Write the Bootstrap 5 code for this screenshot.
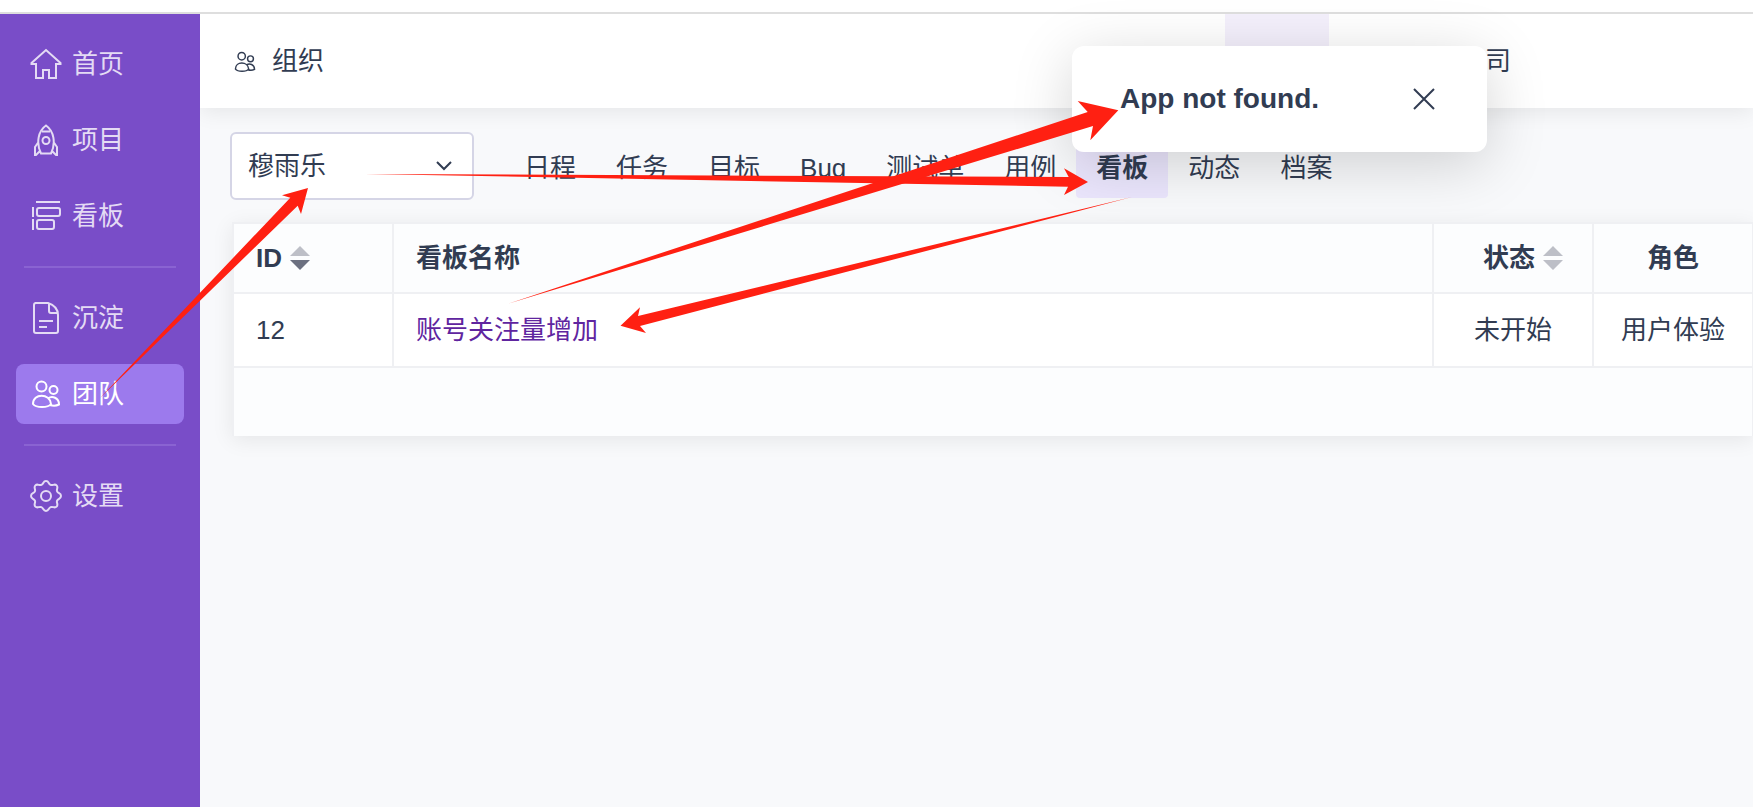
<!DOCTYPE html>
<html lang="zh-CN">
<head>
<meta charset="utf-8">
<meta name="viewport" content="width=device-width, initial-scale=1">
<title>组织 - 看板</title>
<link rel="stylesheet" href="https://cdn.jsdelivr.net/npm/bootstrap@5.3.0/dist/css/bootstrap.min.css">
<style>
  body { font-family: "Liberation Sans", "Noto Sans CJK SC", sans-serif; font-size: 26px; line-height: 40px; color: #313c52; background: #f8f9fb; overflow: hidden; }
  .top-strip { height: 14px; border-bottom: 2px solid #dedede; }
  .side-menu { width: 200px; background: #794dc8; padding: 20px 16px; }
  .side-menu ul { gap: 16px; }
  .side-menu .nav-link { display: flex; align-items: center; gap: 10px; height: 60px; padding: 0 14px; border-radius: 8px; color: #e4dbf4; }
  .side-menu .nav-link.active { background: #9c7aed; color: #fff; }
  .side-menu hr { margin: 4px 8px; border-top: 2px solid #8a63d2; opacity: 1; }
  .line-icon { fill: none; stroke: currentColor; stroke-width: 2; flex: none; }
  .app-bar { height: 94px; padding: 0 242px 0 34px; box-shadow: 0 4px 20px rgba(0,0,0,.08); }
  .app-bar .marker { width: 104px; background: #f4f0fc; margin-right: 156px; }
  .work-area { padding: 24px 0 0 30px; }
  .user-pick { width: 244px; height: 68px; border: 2px solid #d5d5e6; border-radius: 6px; padding: 0 16px; font-size: 26px; line-height: 40px; color: inherit; background: #fff; appearance: none; }
  .pick-wrap svg { position: absolute; right: 21px; top: 28px; pointer-events: none; }
  .view-row { gap: 30px; }
  .view-tabs .nav-link { height: 64px; padding: 14px 20px 10px; border-radius: 4px; color: inherit; white-space: nowrap; }
  .view-tabs .nav-link.active { background: #ebe6fd; font-weight: 700; }
  .board-box { margin: 22px 0 0 2px; box-shadow: 0 4px 20px rgba(0,0,0,.08); }
  .board-grid { table-layout: fixed; border-collapse: separate; border-spacing: 0; color: inherit; }
  .board-grid > * > tr > * { border: 0 solid #eff0f3; border-width: 2px 0 0 2px; padding: 0 22px; height: 70px; color: inherit; background: #fcfdfe; vertical-align: middle; box-shadow: none; }
  .board-grid > tbody > tr > td { height: 74px; background: #fff; padding: 0 10px; }
  .board-grid > tbody > tr > td:nth-child(-n+2) { padding: 0 22px; }
  .board-grid > thead > tr > .state-col { padding-left: 42px; }
  .board-grid > * > tr > :last-child { border-right-width: 1px; }
  .board-grid .fixed-col { width: 160px; }
  .board-grid .fixed-col:last-child { width: 161px; }
  .board-grid a { color: #5f259f; }
  .notice { position: absolute; z-index: 5; left: 1072px; top: 46px; width: 415px; height: 106px; border-radius: 12px; padding: 0 50px 0 48px; box-shadow: 0 12px 60px rgba(0,0,0,.17); }
  .notice strong { font-size: 28px; }
  .notice .btn { color: inherit; }
  .notes { position: absolute; z-index: 10; left: 0; top: 0; pointer-events: none; fill: #ff2012; }
</style>
</head>
<body class="d-flex flex-column vh-100 position-relative">
<div class="top-strip bg-white flex-shrink-0"></div>
<div class="d-flex flex-grow-1">
  <nav class="side-menu flex-shrink-0" aria-label="主菜单">
    <ul class="nav flex-column flex-nowrap">
      <li><a class="nav-link" href="#home"><svg class="line-icon" width="32" height="32" viewBox="0 0 32 32"><path d="M6 16H1.500v-1L16 2l14.500 13v1H26v14h-7v-8h-6v8H6V15"/></svg>首页</a></li>
      <li><a class="nav-link" href="#project"><svg class="line-icon" width="32" height="32" viewBox="0 0 32 32"><path d="M11 29.500C6 19 8 7 16 1.500c8 5.500 10 17.500 5 28zM12 7.500h8M8.500 18 5 23v9l5-5M23.500 18l3.500 5v9l-5-5"/><circle cx="16" cy="16.500" r="3.500"/></svg>项目</a></li>
      <li><a class="nav-link" href="#kanban"><svg class="line-icon" width="32" height="32" viewBox="0 0 32 32"><path d="M6 2h24M3 7v10M3 19v11"/><rect x="7" y="8" width="23" height="8" rx="2"/><rect x="7" y="20" width="17" height="9" rx="2"/></svg>看板</a></li>
      <li><hr></li>
      <li><a class="nav-link" href="#docs"><svg class="line-icon" width="32" height="32" viewBox="0 0 32 32"><path d="M5 1h13c6 2 10 6 10 12v16q0 2-2 2H6q-2 0-2-2V3q0-2 2-2M19 1v8q0 2 2 2h7M9 19h14M9 25h8"/></svg>沉淀</a></li>
      <li><a class="nav-link active" aria-current="page" href="#team"><svg class="line-icon" width="32" height="32" viewBox="0 0 32 32"><circle cx="11.500" cy="8.500" r="5"/><circle cx="23.500" cy="12" r="4"/><path d="M3 26c0-11 17-11 18 0-3 4-15 4-18 0zM18 20.500c4-3 11-1 11 6-3 1.500-6 1.500-9 .5"/></svg>团队</a></li>
      <li><hr></li>
      <li><a class="nav-link" href="#settings"><svg class="line-icon" width="32" height="32" viewBox="0 0 32 32"><circle cx="16" cy="16" r="5"/><path d="M16 1C19 1 18.300 3.900 20.600 4.900S24.500 3.300 26.600 5.400 26.100 9.100 27.100 11.400 31 13 31 16 28.100 18.300 27.100 20.600 28.700 24.500 26.600 26.600 22.900 26.100 20.600 27.100 19 31 16 31 13.700 28.100 11.400 27.100 7.500 28.700 5.400 26.600 5.900 22.900 4.900 20.600 1 19 1 16 3.900 13.700 4.900 11.400 3.300 7.500 5.400 5.400 9.100 5.900 11.400 4.900 13 1 16 1z"/></svg>设置</a></li>
    </ul>
  </nav>
  <div class="flex-grow-1 overflow-hidden">
    <header class="app-bar bg-white d-flex align-items-stretch">
      <div class="d-flex align-items-center gap-3">
        <svg class="line-icon" width="22" height="22" viewBox="1 1 30 28"><circle cx="11.500" cy="8.500" r="5"/><circle cx="23.500" cy="12" r="4"/><path d="M3 26c0-11 17-11 18 0-3 4-15 4-18 0zM18 20.500c4-3 11-1 11 6-3 1.500-6 1.500-9 .5"/></svg>
        <span>组织</span>
      </div>
      <div class="marker ms-auto"></div>
      <span class="align-self-center">司</span>
    </header>
    <main class="work-area">
      <div class="view-row d-flex align-items-center">
        <div class="pick-wrap position-relative">
          <select class="user-pick d-block" aria-label="成员"><option>穆雨乐</option></select>
          <svg class="line-icon" width="18" height="12" viewBox="0 0 18 12"><path d="m2 2 7 7 7-7"/></svg>
        </div>
        <nav class="nav view-tabs flex-nowrap">
          <a class="nav-link" href="#calendar">日程</a>
          <a class="nav-link" href="#task">任务</a>
          <a class="nav-link" href="#target">目标</a>
          <a class="nav-link" href="#bug">Bug</a>
          <a class="nav-link" href="#testtask">测试单</a>
          <a class="nav-link" href="#testcase">用例</a>
          <a class="nav-link active" aria-current="page" href="#board">看板</a>
          <a class="nav-link" href="#dynamic">动态</a>
          <a class="nav-link" href="#profile">档案</a>
        </nav>
      </div>
      <div class="board-box">
        <table class="table board-grid mb-0">
          <thead><tr>
            <th class="fixed-col" scope="col"><span class="d-flex align-items-center gap-2">ID <svg width="20" height="24" viewBox="0 0 20 24"><path fill="#bdbfc7" d="M0 10 10 0l10 10z"/><path fill="#6b7080" d="M0 14 10 24 20 14z"/></svg></span></th>
            <th scope="col">看板名称</th>
            <th class="fixed-col state-col" scope="col"><span class="d-flex align-items-center justify-content-center gap-2">状态 <svg class="flex-shrink-0" width="20" height="24" viewBox="0 0 20 24"><path fill="#bdbfc7" d="M0 10 10 0l10 10zM0 14 10 24 20 14z"/></svg></span></th>
            <th class="fixed-col text-center" scope="col">角色</th>
          </tr></thead>
          <tbody><tr>
            <td>12</td>
            <td><a class="text-decoration-none" href="#board-12">账号关注量增加</a></td>
            <td class="text-center">未开始</td>
            <td class="text-center">用户体验</td>
          </tr></tbody>
          <tfoot><tr><td colspan="4"></td></tr></tfoot>
        </table>
      </div>
    </main>
  </div>
</div>
<div class="notice bg-white d-flex align-items-center justify-content-between" role="alert">
  <strong>App not found.</strong>
  <button class="btn p-0 border-0 d-flex" type="button" aria-label="关闭"><svg class="line-icon" width="26" height="26" viewBox="0 0 26 26"><path d="m3 3 20 20M23 3 3 23"/></svg></button>
</div>
<svg class="notes" width="1140" height="410" viewBox="0 0 1140 410" aria-hidden="true">
  <path d="M100 398 290.300 197.700 282 195.300 308 188 301 214 297.700 205.700z"/>
  <path d="M365 174 1068.700 177 1064 168.300 1088 182 1064 195 1068 186.700z"/>
  <path d="M507 304 1087.700 112 1077.700 101 1118.300 110.300 1090.300 140.300 1093 126z"/>
  <path d="M1132 197 638 316 640 307.300 620.500 325.700 646 333 640 326z"/>
</svg>
<script src="https://cdn.jsdelivr.net/npm/bootstrap@5.3.0/dist/js/bootstrap.bundle.min.js"></script>
</body>
</html>
